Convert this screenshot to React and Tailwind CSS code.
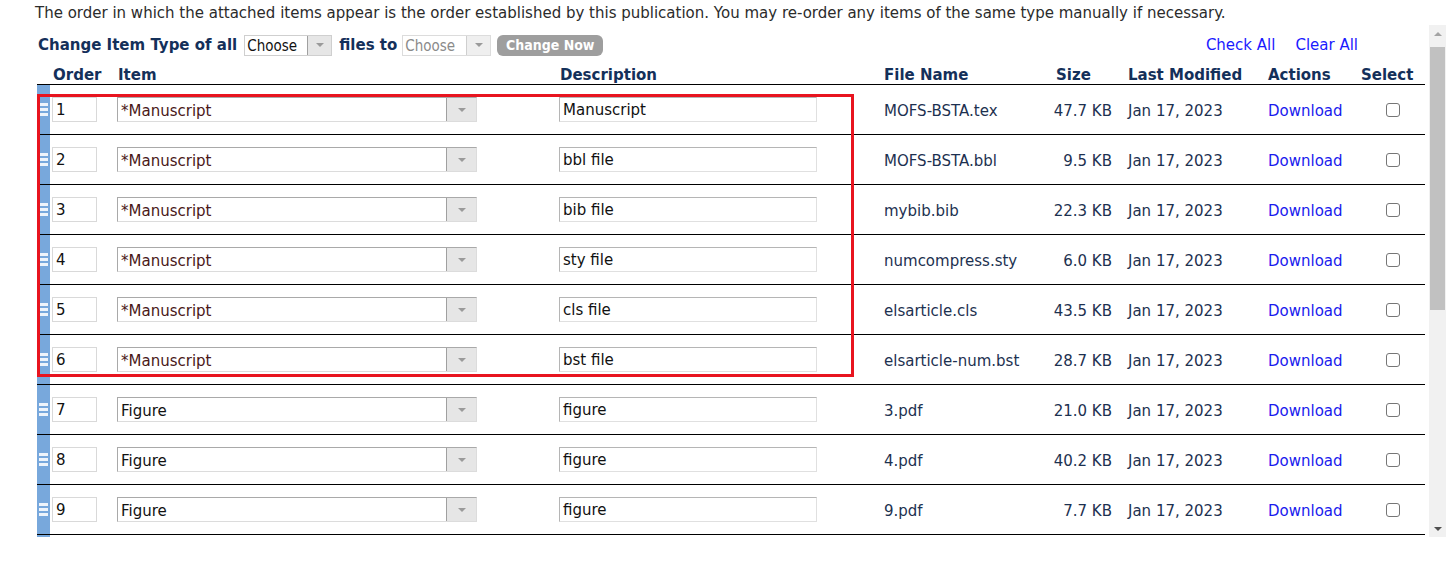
import React from "react";

const rows = [
  { n: 1, item: "*Manuscript", desc: "Manuscript", file: "MOFS-BSTA.tex", size: "47.7 KB" },
  { n: 2, item: "*Manuscript", desc: "bbl file", file: "MOFS-BSTA.bbl", size: "9.5 KB" },
  { n: 3, item: "*Manuscript", desc: "bib file", file: "mybib.bib", size: "22.3 KB" },
  { n: 4, item: "*Manuscript", desc: "sty file", file: "numcompress.sty", size: "6.0 KB" },
  { n: 5, item: "*Manuscript", desc: "cls file", file: "elsarticle.cls", size: "43.5 KB" },
  { n: 6, item: "*Manuscript", desc: "bst file", file: "elsarticle-num.bst", size: "28.7 KB" },
  { n: 7, item: "Figure", desc: "figure", file: "3.pdf", size: "21.0 KB" },
  { n: 8, item: "Figure", desc: "figure", file: "4.pdf", size: "40.2 KB" },
  { n: 9, item: "Figure", desc: "figure", file: "9.pdf", size: "7.7 KB" },
];

const grid = "grid grid-cols-[13px_67px_442px_325px_156px_80px_148px_93px_64px] items-center";

const Arrow = ({ dark }) => (
  <span
    className={`w-0 h-0 border-l-[4px] border-r-[4px] border-t-[4px] border-l-transparent border-r-transparent ${dark ? "border-t-[#505050]" : "border-t-[#9a9a9a]"}`}
  />
);

const Grip = () => (
  <div className="flex flex-col gap-[2px] items-center">
    <span className="block w-[9px] h-[3px] bg-[#eef4fb]" />
    <span className="block w-[9px] h-[3px] bg-[#eef4fb]" />
    <span className="block w-[9px] h-[3px] bg-[#eef4fb]" />
  </div>
);

const ItemSelect = ({ value }) => (
  <div className="w-[360px] h-[25px] flex border border-[#a9a9a9] border-b-[#dcdcdc] border-r-[#dcdcdc] bg-white">
    <div className={`flex-1 pl-[3px] pt-[3px] flex items-center text-[15px] ${value.startsWith("*") ? "text-[#4a1818]" : "text-[#111]"}`}>
      {value}
    </div>
    <div className="w-[30px] bg-[#e6e6e6] border-l border-[#a0a0a0] flex items-center justify-center">
      <Arrow />
    </div>
  </div>
);

const Row = ({ r }) => (
  <div className={`${grid} h-[50px] border-b border-black`}>
    <div className="h-full bg-[#78a8dc] flex items-center justify-center">
      <Grip />
    </div>
    <div className="pl-[2px]">
      <div className="w-[45px] h-[25px] border border-[#d9d9d9] flex items-center pl-[3px] pt-[2px] text-[15px] text-[#111]">
        {r.n}
      </div>
    </div>
    <div>
      <ItemSelect value={r.item} />
    </div>
    <div>
      <div className="w-[258px] h-[25px] border border-[#b5b5b5] border-b-[#e0e0e0] border-r-[#e0e0e0] flex items-center pl-[3px] pt-[1px] text-[15px] text-[#111]">
        {r.desc}
      </div>
    </div>
    <div className="pt-[3px] text-[15px] text-[#1d3150] whitespace-nowrap">{r.file}</div>
    <div className="pt-[3px] text-[15px] text-[#1d3150] text-right pr-[8px] whitespace-nowrap">{r.size}</div>
    <div className="pt-[3px] text-[15px] text-[#1d3150] pl-[8px] whitespace-nowrap">Jan 17, 2023</div>
    <div className="pt-[3px] text-[15px] text-[#1a1aee]">Download</div>
    <div className="flex justify-center">
      <div className="w-[14px] h-[14px] rounded-[3px] border border-[#767676] bg-white" />
    </div>
  </div>
);

export default function App() {
  return (
    <div className="w-[1446px] h-[565px] bg-white overflow-hidden font-['DejaVu_Sans',sans-serif]">
      <p className="h-[25px] pl-[35px] pt-[2px] text-[15px] text-[#2b2b2b] whitespace-nowrap">
        The order in which the attached items appear is the order established by this publication. You may re-order any items of the same type manually if necessary.
      </p>
      <div className="flex h-[512px]">
        <div className="w-[1429px] overflow-hidden pl-[37px]">
          {/* Toolbar */}
          <div className="mt-[9px] h-[22px] flex items-center w-[1388px]">
            <span className="ml-[1px] font-bold text-[15px] text-[#14305a]">Change Item Type of all</span>
            <div className="ml-[7px] w-[88px] h-[21px] flex border border-[#cfcfcf] bg-white">
              <div className="flex-1 pl-[2px] pt-[2px] flex items-center text-[15px] text-[#111] font-['DejaVu_Sans_Condensed','DejaVu_Sans',sans-serif]">Choose</div>
              <div className="w-[24px] bg-[#e6e6e6] border-l border-[#a0a0a0] flex items-center justify-center">
                <Arrow />
              </div>
            </div>
            <span className="ml-[7px] font-bold text-[15px] text-[#14305a]">files to</span>
            <div className="ml-[5px] w-[89px] h-[21px] flex border border-[#dcdcdc] bg-white">
              <div className="flex-1 pl-[2px] pt-[2px] flex items-center text-[15px] text-[#8a8a8a] font-['DejaVu_Sans_Condensed','DejaVu_Sans',sans-serif]">Choose</div>
              <div className="w-[24px] bg-[#efefef] border-l border-[#cfcfcf] flex items-center justify-center">
                <Arrow />
              </div>
            </div>
            <div className="ml-[6px] w-[106px] h-[21px] rounded-[6px] bg-[#9e9e9e] flex items-center justify-center text-white font-bold text-[14px] font-['DejaVu_Sans_Condensed','DejaVu_Sans',sans-serif]">
              Change Now
            </div>
            <div className="ml-auto mr-[67px] flex gap-[20px] text-[15px] text-[#1a1aff]">
              <span>Check All</span>
              <span>Clear All</span>
            </div>
          </div>

          {/* Table */}
          <div className="relative w-[1388px] mt-[8px]">
            <div className={`${grid} h-[21px] border-b border-black font-bold text-[15px] text-[#14305a]`}>
              <div />
              <div className="pl-[3px]">Order</div>
              <div className="pl-[1px]">Item</div>
              <div className="pl-[1px]">Description</div>
              <div>File Name</div>
              <div className="pl-[16px]">Size</div>
              <div className="pl-[8px]">Last Modified</div>
              <div>Actions</div>
              <div className="text-center pr-[14px] whitespace-nowrap">Select</div>
            </div>
            {rows.map((r) => (
              <Row key={r.n} r={r} />
            ))}
            <div className={`${grid} h-[4px]`}>
              <div className="h-full bg-[#78a8dc]" />
            </div>
            <div className="absolute left-0 top-[30px] w-[817px] h-[283px] border-[3px] border-[#e8141f] pointer-events-none" />
          </div>
        </div>

        {/* Scrollbar */}
        <div className="w-[17px] h-full bg-[#f1f1f1] flex flex-col">
          <div className="h-[17px] flex items-center justify-center">
            <span className="w-0 h-0 border-l-[4px] border-r-[4px] border-b-[4px] border-l-transparent border-r-transparent border-b-[#a3a3a3]" />
          </div>
          <div className="flex-1 px-[1px] pt-[5px]">
            <div className="h-[263px] bg-[#c1c1c1]" />
          </div>
          <div className="h-[17px] flex items-center justify-center">
            <Arrow dark />
          </div>
        </div>
      </div>
    </div>
  );
}
